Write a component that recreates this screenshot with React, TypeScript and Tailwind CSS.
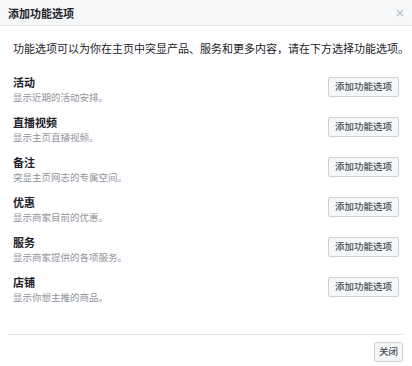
import React from 'react';

const options = [
  { title: '活动', desc: '显示近期的活动安排。' },
  { title: '直播视频', desc: '显示主页直播视频。' },
  { title: '备注', desc: '突显主页网志的专属空间。' },
  { title: '优惠', desc: '显示商家目前的优惠。' },
  { title: '服务', desc: '显示商家提供的各项服务。' },
  { title: '店铺', desc: '显示你想主推的商品。' },
];

const font = { fontFamily: '"Noto Sans CJK SC", "Liberation Sans", sans-serif' };

export default function App() {
  return (
    <div className="w-[412px] h-[366px] bg-white flex flex-col text-[#1d2129]" style={font}>
      <div className="h-[26px] shrink-0 flex items-center justify-between pl-2 pr-[8px] bg-[#f6f7f9] border-b border-[#e5e5e5]">
        <span className="text-[11px] font-bold leading-[14px]">添加功能选项</span>
        <button className="text-[#bec2c9] leading-none">
          <svg width="8" height="8" viewBox="0 0 8 8">
            <path d="M1 1 L7 7 M7 1 L1 7" stroke="#bec2c9" strokeWidth="1.5" />
          </svg>
        </button>
      </div>

      <p className="mt-[15px] px-[13px] text-[11px] leading-[14px] whitespace-nowrap">
        功能选项可以为你在主页中突显产品、服务和更多内容，请在下方选择功能选项。
      </p>

      <div className="mt-[20px] flex flex-col gap-[12px] pl-[13px] pr-[13px]">
        {options.map((o) => (
          <div key={o.title} className="h-[28px] flex items-start justify-between">
            <div className="flex flex-col">
              <span className="text-[11px] font-bold leading-[14px]">{o.title}</span>
              <span className="mt-[2px] text-[9.5px] leading-[12px] text-[#90949c]">{o.desc}</span>
            </div>
            <button className="mt-[2px] h-[20px] w-[71px] bg-[#f6f7f9] border border-[#ced0d4] rounded-[2px] text-[9.5px] text-[#4b4f56] font-medium leading-none">
              添加功能选项
            </button>
          </div>
        ))}
      </div>

      <div className="mt-[31px] mx-2 border-t border-[#e5e5e5]" />
      <div className="mt-[7px] flex justify-end pr-[9px]">
        <button className="h-[20px] w-[29px] bg-[#f6f7f9] border border-[#ced0d4] rounded-[2px] text-[9.5px] text-[#4b4f56] font-medium leading-none">
          关闭
        </button>
      </div>
    </div>
  );
}
